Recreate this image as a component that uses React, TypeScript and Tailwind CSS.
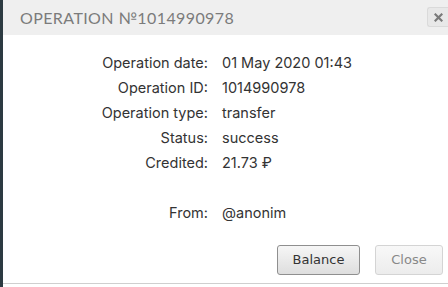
import React from "react";

const rows: [string, string][] = [
  ["Operation date:", "01 May 2020 01:43"],
  ["Operation ID:", "1014990978"],
  ["Operation type:", "transfer"],
  ["Status:", "success"],
  ["Credited:", "21.73 ₽"],
];

export default function App() {
  return (
    <div className="flex h-[287px] w-[448px] overflow-hidden bg-white">
      <div className="w-[3px] shrink-0 bg-[#2c3a41]" />
      <div className="flex min-w-0 flex-1 flex-col">
        <div className="flex h-[35px] shrink-0 items-center justify-between bg-[#efefef] pl-[17px]">
          <div
            className="text-[16px] uppercase tracking-[0.4px] text-[#7b7b7b]"
            style={{ fontFamily: "Lato, 'Noto Sans', sans-serif" }}
          >
            Operation №1014990978
          </div>
          <div className="mb-[1px] flex h-[20px] w-[21px] items-center justify-center rounded-l-[3px] border border-r-0 border-[#dadada] bg-[#e8e8e8]">
            <svg width="9" height="9" viewBox="0 0 9 9">
              <path d="M1.5 1.5 L7.5 7.5 M7.5 1.5 L1.5 7.5" stroke="#7a7a7a" strokeWidth="2.2" strokeLinecap="square" />
            </svg>
          </div>
        </div>
        <div
          className="flex flex-col pt-[15px] text-[14.5px] leading-[25px] text-[#333]"
          style={{ fontFamily: "Inter, 'Noto Sans', sans-serif" }}
        >
          {rows.map(([l, v]) => (
            <div key={l} className="flex">
              <div className="w-[205px] text-right">{l}</div>
              <div className="pl-[14px]">{v}</div>
            </div>
          ))}
          <div className="h-[25px]" />
          <div className="flex">
            <div className="w-[205px] text-right">From:</div>
            <div className="pl-[14px]">@anonim</div>
          </div>
        </div>
        <div
          className="mt-auto flex justify-end gap-[15px] border-b border-[#cfcfcf] pb-[8px] pr-[5px] text-[13px]"
          style={{ fontFamily: "'DejaVu Sans', Verdana, sans-serif" }}
        >
          <button className="h-[30px] w-[83px] rounded-[3px] border border-[#8f8f8f] bg-gradient-to-b from-[#f6f6f6] to-[#dedede] text-[#333]">
            Balance
          </button>
          <button className="h-[30px] w-[68px] rounded-[3px] border border-[#d4d4d4] bg-gradient-to-b from-[#f8f8f8] to-[#ececec] text-[#888]">
            Close
          </button>
        </div>
        <div className="h-[3px] shrink-0" />
      </div>
    </div>
  );
}
